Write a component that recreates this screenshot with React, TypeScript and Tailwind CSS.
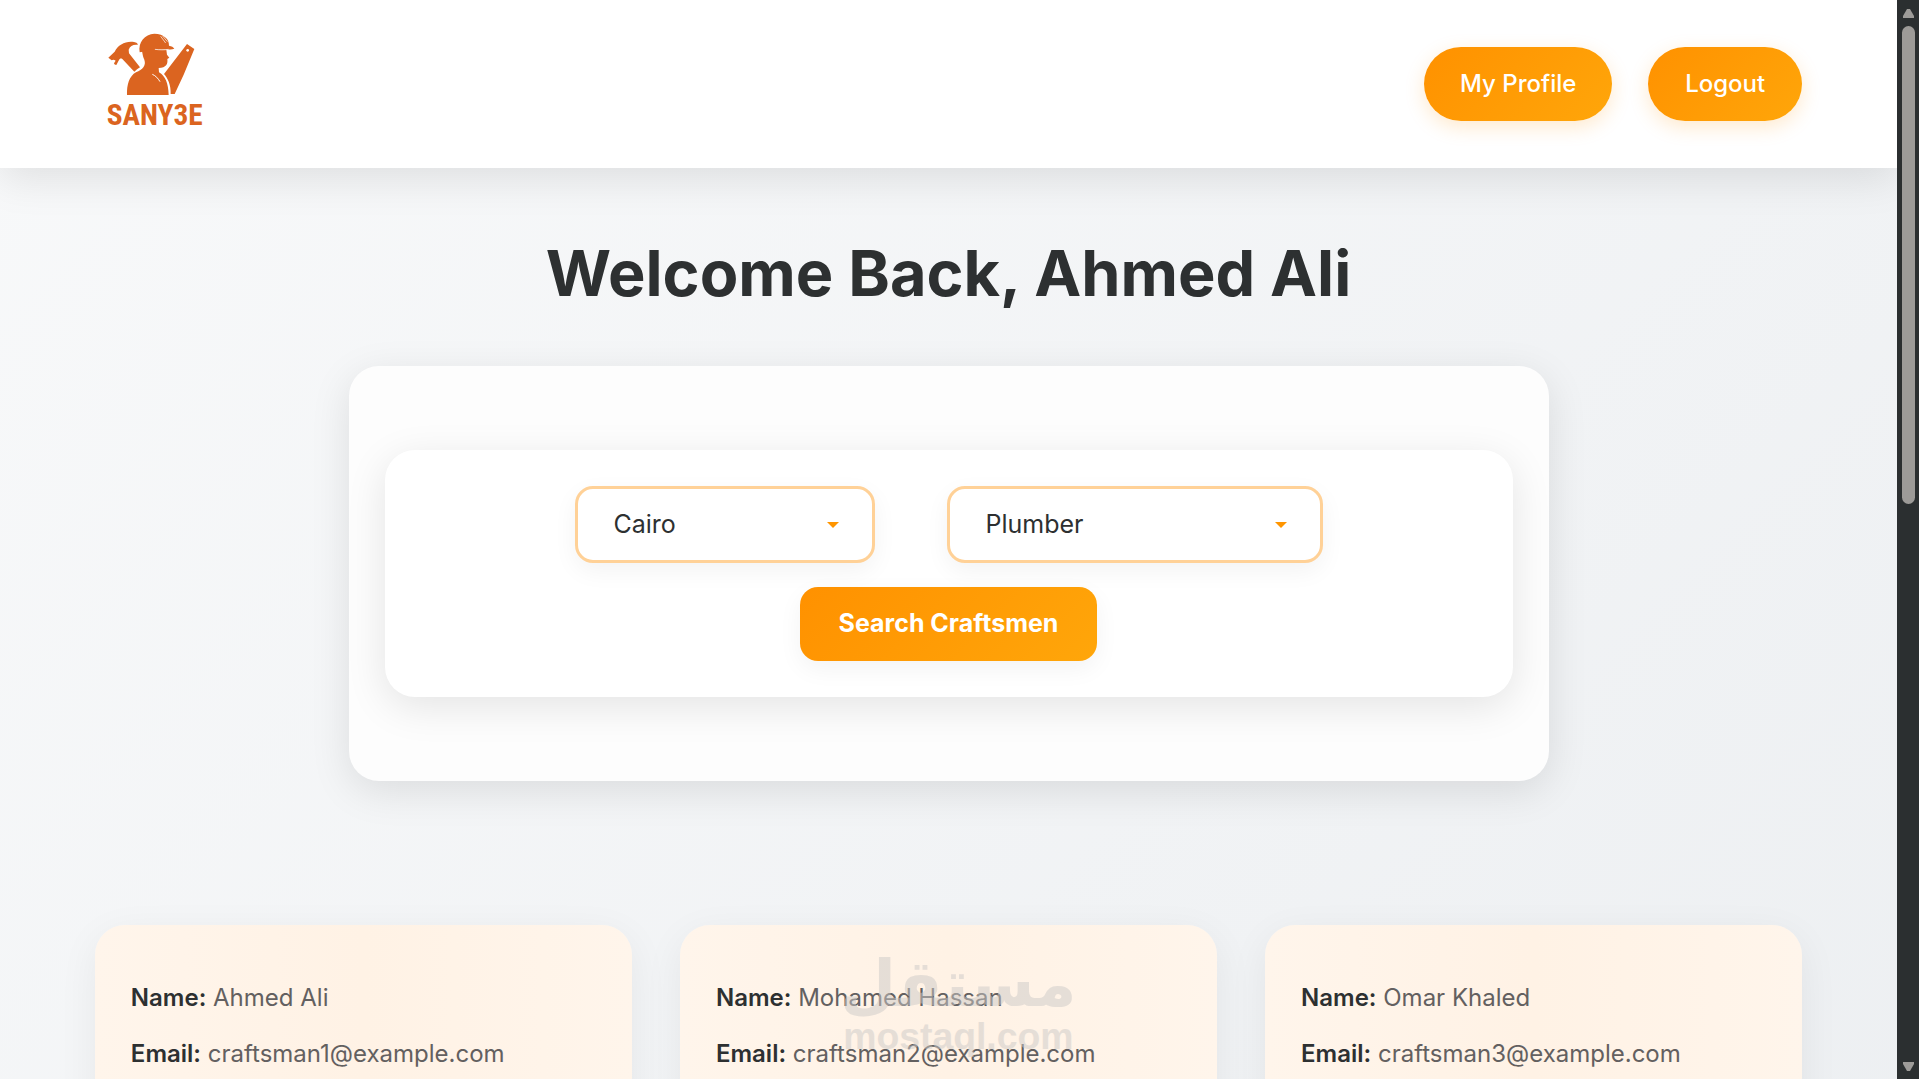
import { useState } from 'react';

const cities = ['Cairo', 'Giza', 'Alexandria'];
const professions = ['Plumber', 'Electrician', 'Carpenter'];

const craftsmen = [
  { name: 'Ahmed Ali', email: 'craftsman1@example.com' },
  { name: 'Mohamed Hassan', email: 'craftsman2@example.com' },
  { name: 'Omar Khaled', email: 'craftsman3@example.com' },
];

function Logo() {
  return (
    <svg viewBox="15 0 390 360" className="w-[130px] h-[120px]" fill="#db6420" role="img" aria-label="SANY3E">
      {/* hammer */}
      <path d="M55 113 L74 95 C84 74 108 62 132 66 C140 67 144 71 143 75 C130 73 120 79 116 89 L117 100 L150 142 C144 146 138 150 133 155 L97 117 C93 114 88 116 87 120 L79 135 C75 135 73 133 72 130 L77 122 C73 119 69 118 65 121 Z" />
      {/* saw */}
      <path d="M291 72 L313 87 L281 164 L254 222 L242 222 C243 196 234 175 222 162 Z" />
      <circle cx="293" cy="91" r="4" fill="#fff" />
      {/* helmet */}
      <path d="M149 97 C144 67 164 42 193 41 C222 42 238 57 237 77 C245 78 250 81 253 86 C235 91 216 87 195 89 C180 91 164 94 149 97 Z" />
      <path d="M212 49 L227 69 M218 48 L232 65" stroke="#fff" strokeWidth="2" />
      {/* head and shoulders */}
      <path d="M156 93 C176 88 198 88 229 89 L231 104 L238 113 L232 117 C234 132 229 143 206 144 L207 157 C226 168 235 190 236 225 L111 225 C110 194 118 168 138 157 C158 148 169 137 163 119 C159 111 158 104 156 93 Z" />
      <path d="M195 88 C210 90 222 90 236 88" stroke="#fff" strokeWidth="2" fill="none" />
      <path d="M187 163 C197 167 204 175 210 185" stroke="#fff" strokeWidth="3" fill="none" />
      <text x="194" y="316" textAnchor="middle" fontSize="88" fontWeight="700" fontFamily="'Liberation Sans Narrow', 'Roboto Condensed', sans-serif">SANY3E</text>
    </svg>
  );
}

type DropdownProps = {
  label: string;
  options: string[];
  value: string;
  onChange: (value: string) => void;
  className: string;
};

function Dropdown({ label, options, value, onChange, className }: DropdownProps) {
  return (
    <div className={`relative ${className}`}>
      <select
        aria-label={label}
        value={value}
        onChange={(e) => onChange(e.target.value)}
        className="appearance-none w-full h-[77px] pl-9 pr-14 rounded-[18px] border-3 border-[#ffd197] bg-white text-[25px] text-[#2d3031] shadow-[0_8px_24px_rgba(0,0,0,0.05)] cursor-pointer"
      >
        {options.map((option) => (
          <option key={option}>{option}</option>
        ))}
      </select>
      <svg viewBox="0 0 12 6" className="absolute right-9 top-9 w-3 h-[6px] pointer-events-none" fill="#ff9500">
        <path d="M0 0h12L6 6z" />
      </svg>
    </div>
  );
}

function Watermark() {
  return (
    <svg viewBox="0 0 750 390" className="absolute inset-x-0 bottom-2 mx-auto w-[250px] h-[130px] pointer-events-none opacity-50" fill="#cdcac8" aria-hidden="true">
      <text x="370" y="196" textAnchor="middle" fontSize="194" fontWeight="700" fontFamily="'DejaVu Sans', sans-serif">مستقل</text>
      <text x="370" y="325" textAnchor="middle" fontSize="112" fontWeight="700" fontFamily="'Liberation Sans', sans-serif">mostaql.com</text>
    </svg>
  );
}

function ScrollRail() {
  return (
    <div className="w-[22px] shrink-0 bg-[#2b2f30] flex flex-col items-center justify-between py-2" aria-hidden="true">
      <div className="flex flex-col items-center gap-2">
        <svg viewBox="0 0 11 10" className="w-[11px] h-[10px]" fill="#9d9b98"><path d="M4 1h3l4 7v2H0V8z" /></svg>
        <div className="w-[13px] h-[478px] rounded-full bg-[#9d9b98]" />
      </div>
      <svg viewBox="0 0 11 10" className="w-[11px] h-[10px]" fill="#9d9b98"><path d="M0 1h11v2L7 10H4L0 3z" /></svg>
    </div>
  );
}

export default function App() {
  const [city, setCity] = useState('Cairo');
  const [profession, setProfession] = useState('Plumber');

  return (
    <div className="relative flex h-screen overflow-hidden font-[Inter,sans-serif] text-[#2d3031]">
      <div className="flex-1 min-w-0 overflow-hidden bg-linear-135 from-[#f8f9fa] to-[#e9ecef] to-140%">
        <header className="h-[168px] px-[5%] flex items-center justify-between bg-white shadow-[0_10px_40px_rgba(0,0,0,0.1)]">
          <a href="#home" className="pb-2">
            <Logo />
          </a>
          <nav className="flex gap-9">
            <button type="button" className="w-[188px] h-[74px] rounded-full bg-linear-135 from-[#ff9100] to-[#ffa60a] text-2xl font-medium text-white shadow-[0_6px_20px_rgba(255,145,0,0.2)] cursor-pointer">
              My Profile
            </button>
            <button type="button" className="w-[154px] h-[74px] rounded-full bg-linear-135 from-[#ff9100] to-[#ffa60a] text-2xl font-medium text-white shadow-[0_6px_20px_rgba(255,145,0,0.2)] cursor-pointer">
              Logout
            </button>
          </nav>
        </header>

        <main className="px-[5%] pt-[60px]">
          <h1 className="text-center text-[63px] leading-[90px] font-bold">Welcome Back, Ahmed Ali</h1>

          <section className="mt-12 mx-auto max-w-[1200px] px-9 py-21 rounded-[30px] bg-[#fdfdfd] shadow-[0_10px_40px_rgba(0,0,0,0.1)]">
            <form
              onSubmit={(e) => e.preventDefault()}
              className="p-9 flex flex-col items-center gap-6 rounded-[30px] bg-white shadow-[0_10px_40px_rgba(0,0,0,0.1)]"
            >
              <div className="flex justify-center gap-18">
                <Dropdown label="City" options={cities} value={city} onChange={setCity} className="w-[300px]" />
                <Dropdown label="Profession" options={professions} value={profession} onChange={setProfession} className="w-[376px]" />
              </div>
              <button type="submit" className="w-[297px] h-[74px] rounded-[18px] bg-linear-135 from-[#ff9100] to-[#ffa60a] text-[25px] font-bold text-white shadow-[0_8px_24px_rgba(0,0,0,0.05)] cursor-pointer">
                Search Craftsmen
              </button>
            </form>
          </section>

          <section className="mt-36 grid grid-cols-3 gap-12">
            {craftsmen.map((craftsman) => (
              <article key={craftsman.email} className="px-9 py-14 rounded-[30px] bg-linear-to-r from-[#fff5eb] via-[#fff2e5] to-[#fff5eb] shadow-[0_10px_40px_rgba(0,0,0,0.06)] text-2xl leading-[34px] text-[#636060]">
                <p>
                  <strong className="font-semibold text-[#2d3031]">Name:</strong> {craftsman.name}
                </p>
                <p className="mt-[22px]">
                  <strong className="font-semibold text-[#2d3031]">Email:</strong> {craftsman.email}
                </p>
              </article>
            ))}
          </section>
        </main>
      </div>
      <ScrollRail />
      <Watermark />
    </div>
  );
}
